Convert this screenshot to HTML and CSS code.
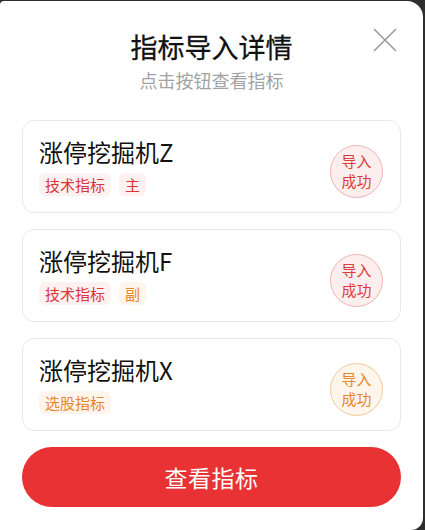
FILE: index.html
```html
<!DOCTYPE html>
<html lang="zh-CN">
<head>
  <meta charset="UTF-8">
  <title>指标导入详情</title>
  <link rel="stylesheet" href="styles.css">
</head>
<body>

  <div class="modal">
    <button class="btn-close" aria-label="关闭">
      <svg width="24" height="24" viewBox="0 0 24 24">
        <path d="M1 1 L23 23 M23 1 L1 23" stroke="#9a9a9a" stroke-width="1.6" fill="none"/>
      </svg>
    </button>

    <h2 class="modal-title">指标导入详情</h2>
    <p class="modal-sub">点击按钮查看指标</p>

    <div class="list">
      <div class="item">
        <div class="item-info">
          <div class="item-name">涨停挖掘机Z</div>
          <div class="tags">
            <span class="tag tag-red">技术指标</span>
            <span class="tag tag-red">主</span>
          </div>
        </div>
        <div class="stamp stamp-red">导入<br>成功</div>
      </div>

      <div class="item">
        <div class="item-info">
          <div class="item-name">涨停挖掘机F</div>
          <div class="tags">
            <span class="tag tag-red">技术指标</span>
            <span class="tag tag-orange">副</span>
          </div>
        </div>
        <div class="stamp stamp-red">导入<br>成功</div>
      </div>

      <div class="item">
        <div class="item-info">
          <div class="item-name">涨停挖掘机X</div>
          <div class="tags">
            <span class="tag tag-orange">选股指标</span>
          </div>
        </div>
        <div class="stamp stamp-orange">导入<br>成功</div>
      </div>
    </div>

    <button class="btn-voir">查看指标</button>
  </div>

</body>
</html>
```

FILE: styles.css
```css
body, html {
  margin: 0;
  padding: 0;
  font-family: "Noto Sans CJK SC", "Noto Sans", sans-serif;
  background-color: #2e2e2e;
  color: #111;
}

.modal {
  position: relative;
  box-sizing: border-box;
  height: 529px;
  margin: 1px 2px 0 0;
  padding: 27px 22px 0 22px;
  background-color: #fff;
  border-radius: 4px 16px 12px 0;
}

.btn-close {
  position: absolute;
  top: 27px;
  right: 26px;
  padding: 0;
  border: none;
  background: none;
  line-height: 0;
  cursor: pointer;
}

.modal-title {
  margin: 0;
  font-size: 27px;
  font-weight: 400;
  line-height: 38px;
  text-align: center;
  color: #111;
  -webkit-text-stroke: 0.3px #111;
}

.modal-sub {
  margin: 2px 0 0;
  font-size: 18px;
  line-height: 24px;
  text-align: center;
  color: #a3a3a3;
}

.list {
  display: flex;
  flex-direction: column;
  gap: 16px;
  margin-top: 28px;
}

.item {
  display: flex;
  align-items: center;
  justify-content: space-between;
  height: 93px;
  box-sizing: border-box;
  padding: 0 17px 0 16px;
  border: 1px solid #e9e9e9;
  border-radius: 12px;
}

.item-name {
  font-size: 24px;
  line-height: 30px;
  color: #111;
}

.tags {
  display: flex;
  gap: 8px;
  margin-top: 6px;
}

.tag {
  padding: 0 6px;
  font-size: 15px;
  line-height: 23px;
  border-radius: 6px;
}

.tag-red {
  background-color: #fdf1f1;
  color: #dc3535;
}

.tag-orange {
  background-color: #fff5ec;
  color: #e8862a;
}

.stamp {
  display: flex;
  align-items: center;
  justify-content: center;
  width: 53px;
  height: 53px;
  margin-top: 9px;
  box-sizing: border-box;
  border-radius: 50%;
  font-size: 15px;
  line-height: 20px;
  text-align: center;
}

.stamp-red {
  background-color: #fdeeee;
  border: 1px solid #f0b4b4;
  color: #dc3c3c;
}

.stamp-orange {
  background-color: #fff5eb;
  border: 1px solid #f4c99c;
  color: #e8862a;
}

.btn-voir {
  display: block;
  width: 100%;
  height: 60px;
  margin-top: 16px;
  border: none;
  border-radius: 30px;
  background-color: #e83233;
  color: #fff;
  font-family: inherit;
  font-size: 23px;
  letter-spacing: 0.5px;
  cursor: pointer;
}
```
